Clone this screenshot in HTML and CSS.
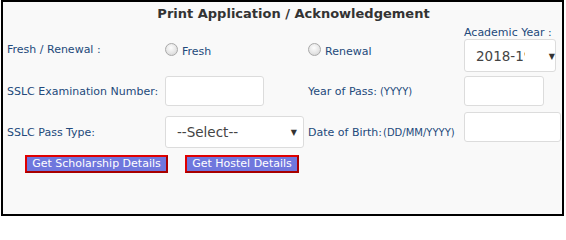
FILE: index.html
```html
<!DOCTYPE html>
<html>
<head>
<meta charset="utf-8">
<link rel="stylesheet" href="styles.css">
</head>
<body>
<div class="panel">
  <div class="title">Print Application / Acknowledgement</div>
  <div class="form">
    <div class="lbl r1">Fresh / Renewal :</div>
    <div class="radio r1"><input type="radio" name="t" class="rb"><span class="rl">Fresh</span></div>
    <div class="radio r1"><input type="radio" name="t" class="rb"><span class="rl">Renewal</span></div>
    <div class="ay">
      <div class="lbl ay-lbl">Academic Year :</div>
      <div class="sel-wrap">
        <select class="sel sel-ay"><option>2018-19</option></select>
        <span class="arrow">&#9660;</span>
      </div>
    </div>

    <div class="lbl r2">SSLC Examination Number:</div>
    <div class="r2"><input type="text" class="txt txt-num"></div>
    <div class="lbl r2">Year of Pass: <span class="small">(YYYY)</span></div>
    <div class="r2"><input type="text" class="txt txt-yr"></div>

    <div class="lbl r3">SSLC Pass Type:</div>
    <div class="r3 sel-cell">
      <div class="sel-wrap">
        <select class="sel sel-pt"><option>--Select--</option></select>
        <span class="arrow">&#9660;</span>
      </div>
    </div>
    <div class="lbl r3">Date of Birth:<span class="small">(DD/MM/YYYY)</span></div>
    <div class="r3 dob-cell"><input type="text" class="txt txt-dob"></div>
  </div>
  <div class="actions">
    <button class="btn btn-sch">Get Scholarship Details</button>
    <button class="btn btn-hos">Get Hostel Details</button>
  </div>
</div>
</body>
</html>
```
FILE: styles.css
```css
html, body {
  margin: 0;
  padding: 0;
  background: #ffffff;
}
body {
  font-family: "DejaVu Sans", Verdana, sans-serif;
  font-size: 11px;
}
.panel {
  box-sizing: border-box;
  margin-left: 1px;
  width: 563px;
  height: 216px;
  border: 2px solid #000;
  background: #f9f9f9;
  padding-left: 4px;
}
.title {
  text-align: center;
  font-weight: bold;
  font-size: 13px;
  line-height: 16px;
  padding: 4px 0 4px 22px;
  color: #333333;
  margin-left: -4px;
}
.form {
  display: grid;
  grid-template-columns: 158px 143px 156px 98px;
  grid-template-rows: 47px 36px 39px;
}
.lbl {
  color: #23497b;
  display: flex;
  align-items: center;
  white-space: nowrap;
}
.small {
  font-size: 10px;
  margin-left: 3px;
}
.lbl.r3 .small { margin-left: 1px; }
.radio {
  display: flex;
  align-items: center;
  color: #23497b;
}
.rb {
  appearance: none;
  -webkit-appearance: none;
  box-sizing: border-box;
  width: 13px;
  height: 13px;
  margin: -1px 4px 0 0;
  border-radius: 50%;
  border: 1px solid #a9a9a9;
  background: radial-gradient(circle at 45% 35%, #fdfdfd 0%, #e6e6e6 55%, #cfcfcf 100%);
}
.rl {
  margin-top: 4px;
}
.ay {
  display: flex;
  flex-direction: column;
}
.ay-lbl {
  height: 13px;
  line-height: 13px;
}
.sel-wrap {
  position: relative;
  display: inline-block;
}
.sel {
  appearance: none;
  -webkit-appearance: none;
  box-sizing: border-box;
  border: 1px solid #dcdcdc;
  border-radius: 3px;
  background: #ffffff;
  font-family: "DejaVu Sans", Verdana, sans-serif;
  font-size: 13.5px;
  color: #444444;
  padding: 0 30px 0 11px;
  margin: 0;
  display: block;
}
.sel-ay {
  width: 92px;
  height: 33px;
}
.sel-pt {
  width: 139px;
  height: 32px;
}
.arrow {
  position: absolute;
  right: 7px;
  top: 50%;
  transform: translateY(-50%);
  font-size: 8px;
  color: #333;
  pointer-events: none;
}
.r2 {
  display: flex;
  align-items: center;
}
.r3.lbl {
  align-self: end;
  height: 32px;
}
.sel-cell {
  align-self: end;
}
.dob-cell {
  align-self: start;
  margin-top: 3px;
}
.txt {
  box-sizing: border-box;
  height: 30px;
  border: 1px solid #dcdcdc;
  border-radius: 3px;
  background: #ffffff;
  margin: 0;
  padding: 0 4px;
}
.txt-num { width: 99px; }
.txt-yr { width: 80px; }
.txt-dob { width: 97px; }
.actions {
  display: flex;
  gap: 17px;
  margin-top: 7px;
  padding-left: 18px;
}
.btn {
  box-sizing: border-box;
  height: 18px;
  padding: 0 2px;
  margin: 0;
  border: 2px solid #e00000;
  border-right-color: #a80000;
  border-bottom-color: #a80000;
  background: #6f77dd;
  color: #ffffff;
  font-family: "DejaVu Sans", Verdana, sans-serif;
  font-size: 11px;
  line-height: 14px;
  white-space: nowrap;
}
.btn-sch { width: 143px; }
.btn-hos { width: 114px; }
```
